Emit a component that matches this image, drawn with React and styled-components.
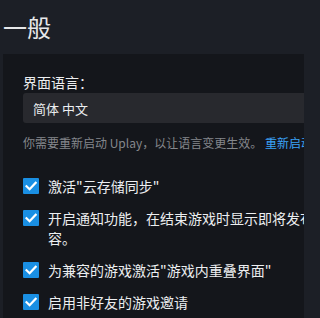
import React from 'react';
import styled, { createGlobalStyle } from 'styled-components';

const GlobalStyle = createGlobalStyle`
  html, body {
    margin: 0;
    padding: 0;
    width: 304px;
    height: 318px;
    background: #1c1f26;
    overflow: hidden;
  }
  body {
    font-family: "Noto Sans CJK SC", "Liberation Sans", sans-serif;
  }
`

const options = [
  { id: 'cloud', text: '激活"云存储同步"' },
  { id: 'notify', text: '开启通知功能，在结束游戏时显示即将发布的新内容。' },
  { id: 'overlay', text: '为兼容的游戏激活"游戏内重叠界面"' },
  { id: 'invite', text: '启用非好友的游戏邀请' },
]

export default function App() {
  return (
    <>
      <GlobalStyle />
      <Page>
        <Title>一般</Title>
        <Panel>
          <Label>界面语言：</Label>
          <Select>简体 中文</Select>
          <Hint>
            你需要重新启动 Uplay，以让语言变更生效。 <HintLink>重新启动</HintLink>
          </Hint>
          <CheckList>
            {options.map(opt => (
              <CheckRow key={opt.id}>
                <Box>
                  <svg width="12" height="10" viewBox="0 0 12 10">
                    <path d="M1.5 5.2 L4.6 8.2 L10.6 1.8" fill="none" stroke="#fff" strokeWidth="2.2" strokeLinecap="square" />
                  </svg>
                </Box>
                <CheckText>{opt.text}</CheckText>
              </CheckRow>
            ))}
          </CheckList>
        </Panel>
      </Page>
    </>
  )
}

const Page = styled.div`
  width: 304px;
  height: 318px;
  overflow: hidden;
  display: flex;
  flex-direction: column;
`

const Title = styled.h1`
  margin: 0;
  padding: 12px 0 0 3px;
  height: 54px;
  flex: none;
  box-sizing: border-box;
  font-size: 24px;
  font-weight: 400;
  line-height: 30px;
  color: #e6e7e9;
`

const Panel = styled.section`
  margin-left: 3px;
  flex: 1;
  min-width: 400px;
  background: #14161b;
  padding: 18px 0 0 20px;
  box-sizing: border-box;
`

const Label = styled.div`
  font-size: 14px;
  line-height: 20px;
  color: #eceef0;
`

const Select = styled.div`
  margin-top: 1px;
  height: 30px;
  width: 360px;
  background: #28292e;
  border-radius: 3px;
  padding-left: 10px;
  display: flex;
  align-items: center;
  font-size: 13px;
  color: #eceef0;
`

const Hint = styled.div`
  margin-top: 12px;
  font-size: 12px;
  line-height: 16px;
  color: #84878c;
  white-space: nowrap;
`

const HintLink = styled.span`
  color: #3ba2f7;
`

const CheckList = styled.div`
  margin-top: 25px;
  display: flex;
  flex-direction: column;
  gap: 12px;
`

const CheckRow = styled.div`
  display: flex;
  align-items: flex-start;
  gap: 9px;
`

const Box = styled.span`
  flex: none;
  width: 16px;
  height: 16px;
  margin-top: 2px;
  background: #1a8fe3;
  border-radius: 1px;
  display: flex;
  align-items: center;
  justify-content: center;
`

const CheckText = styled.span`
  width: 312px;
  font-size: 14px;
  line-height: 20px;
  color: #eceef0;
`
